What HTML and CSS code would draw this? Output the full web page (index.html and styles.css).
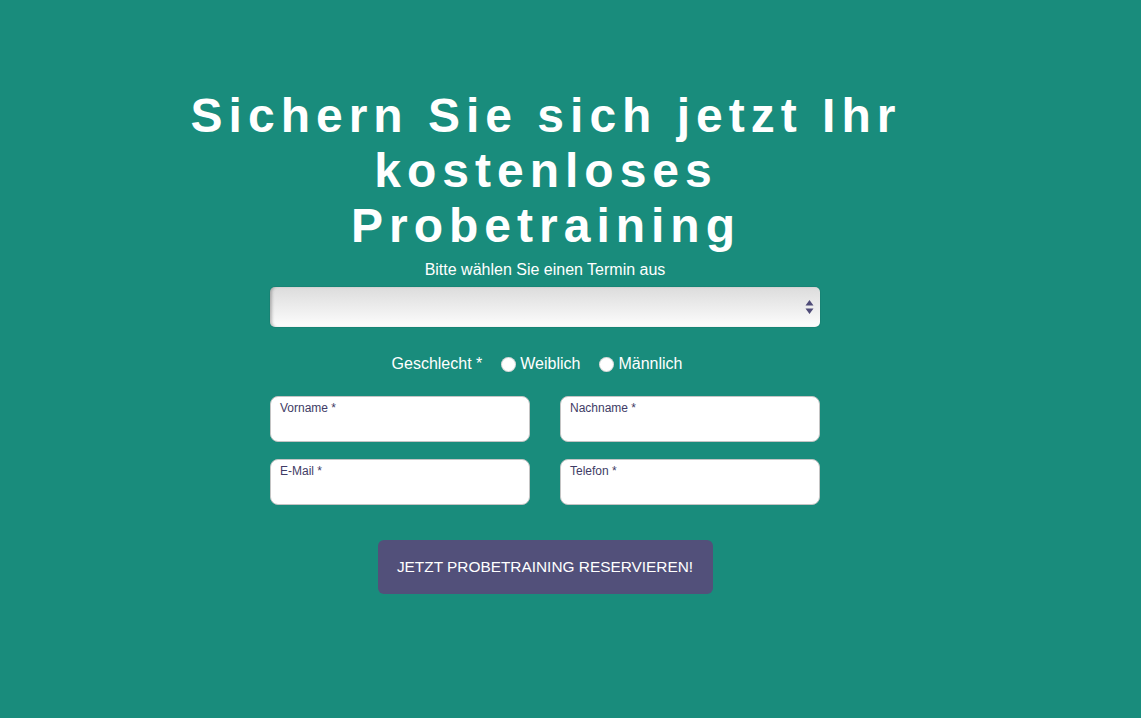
FILE: index.html
```html
<!DOCTYPE html>
<html lang="de">
<head>
<meta charset="utf-8">
<title>Probetraining</title>
<link rel="stylesheet" href="styles.css">
</head>
<body>
<main class="wrap">
  <h1 class="title">Sichern Sie sich jetzt Ihr kostenloses Probetraining</h1>
  <form class="form">
    <label class="select-label" for="termin">Bitte wählen Sie einen Termin aus</label>
    <div class="select">
      <span class="select-arrows">
        <svg width="9" height="16" viewBox="0 0 9 16"><path d="M4.5 1 L8.5 6.5 L0.5 6.5 Z M0.5 9.5 L8.5 9.5 L4.5 15 Z" fill="#4f4c78"/></svg>
      </span>
    </div>
    <div class="gender">
      <span>Geschlecht *</span>
      <span class="radio"><span class="dot"></span>Weiblich</span>
      <span class="radio"><span class="dot"></span>Männlich</span>
    </div>
    <div class="grid">
      <div class="field"><span class="field-label">Vorname *</span></div>
      <div class="field"><span class="field-label">Nachname *</span></div>
      <div class="field"><span class="field-label">E-Mail *</span></div>
      <div class="field"><span class="field-label">Telefon *</span></div>
    </div>
    <div class="actions">
      <button type="button" class="btn">JETZT PROBETRAINING RESERVIEREN!</button>
    </div>
  </form>
</main>
</body>
</html>
```
FILE: styles.css
```css
html, body {
  margin: 0;
  padding: 0;
  background: #198c7c;
  font-family: "Liberation Sans", Arial, sans-serif;
  color: #fff;
  height: 100%;
}
.wrap {
  width: 720px;
  margin-left: 186px;
  padding-top: 88px;
}
.title {
  margin: 0;
  font-size: 48px;
  line-height: 55px;
  font-weight: bold;
  letter-spacing: 6px;
  text-align: center;
}
.form {
  width: 550px;
  margin: 8px 0 0 84px;
  display: flex;
  flex-direction: column;
}
.select-label {
  text-align: center;
  font-size: 16px;
  line-height: 18px;
  margin-bottom: 8px;
}
.select {
  height: 40px;
  border-radius: 5px;
  background: linear-gradient(#dcdcdc, #fdfdfd);
  box-shadow: inset 3px 0 3px -1px rgba(0,0,0,0.25), 0 0 0 1px rgba(0,0,0,0.05);
  display: flex;
  align-items: center;
  justify-content: flex-end;
  padding-right: 6px;
}
.select-arrows { display: flex; }
.gender {
  display: flex;
  justify-content: center;
  align-items: center;
  font-size: 16px;
  margin-top: 28px;
  height: 18px;
  padding-right: 16px;
  gap: 19px;
}
.radio {
  display: flex;
  align-items: center;
  gap: 4px;
}
.dot {
  width: 15px;
  height: 15px;
  border-radius: 50%;
  background: #fff;
  box-shadow: inset 0 0 0 1px rgba(0,0,0,0.15);
}
.grid {
  display: grid;
  grid-template-columns: 260px 260px;
  column-gap: 30px;
  row-gap: 17px;
  margin-top: 23px;
}
.field {
  height: 46px;
  box-sizing: border-box;
  background: #fff;
  border: 1px solid #c4c4c4;
  border-radius: 8px;
  padding: 4px 9px;
}
.field-label {
  font-size: 12px;
  color: #3f3c66;
  line-height: 14px;
  display: block;
}
.actions {
  display: flex;
  justify-content: center;
  margin-top: 35px;
}
.btn {
  width: 335px;
  height: 54px;
  border: 0;
  border-radius: 6px;
  background: #52507a;
  color: #fff;
  font-family: "Liberation Sans", Arial, sans-serif;
  font-size: 15.4px;
}
```
